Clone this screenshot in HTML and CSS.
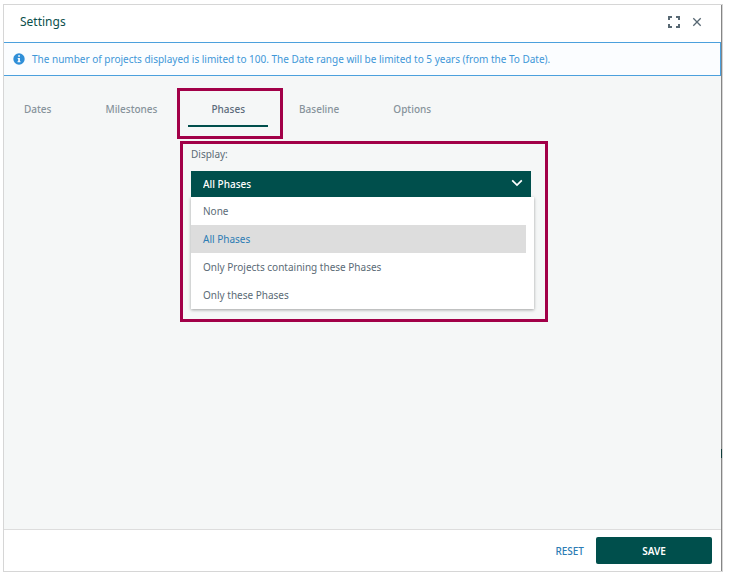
FILE: index.html
```html
<!DOCTYPE html>
<html lang="en">
<head>
<meta charset="utf-8">
<meta name="viewport" content="width=device-width, initial-scale=1">
<title>Settings</title>
<link rel="stylesheet" href="styles.css">
</head>
<body>
<main class="dialog">
  <header class="header">
    <h1 class="title">Settings</h1>
    <button class="icon-button" type="button" aria-label="Expand">
      <svg width="12" height="12" viewBox="0 0 12 12"><path d="M4 1H1v3M8 1h3v3M4 11H1V8M8 11h3V8" fill="none" stroke="currentColor" stroke-width="2"/></svg>
    </button>
    <button class="icon-button" type="button" aria-label="Close">
      <svg width="12" height="12" viewBox="0 0 12 12"><path d="M2.3 2.3l7.4 7.4M9.7 2.3l-7.4 7.4" fill="none" stroke="currentColor" stroke-width="1.3"/></svg>
    </button>
  </header>
  <p class="notice">
    <svg width="12" height="12" viewBox="0 0 12 12" aria-hidden="true"><circle cx="6" cy="6" r="5.7" fill="#2f8fd8"/><path d="M5.2 2.2h1.7v1.6H5.2zM4.7 4.9h2.2v3.3h.6v1.1h-3V8.200h.7V6h-.5z" fill="#fff"/></svg>
    <span>The number of projects displayed is limited to 100. The Date range will be limited to 5 years (from the To Date).</span>
  </p>
  <section class="body">
    <nav class="tabs">
      <a class="tab" href="#dates">Dates</a>
      <a class="tab" href="#milestones">Milestones</a>
      <a class="tab tab-active" href="#phases" aria-current="page">Phases</a>
      <a class="tab" href="#baseline">Baseline</a>
      <a class="tab" href="#options">Options</a>
    </nav>
    <div class="panel">
      <label class="label" for="display">Display:</label>
      <div class="picker">
        <select class="select" id="display">
          <option>None</option>
          <option selected>All Phases</option>
          <option>Only Projects containing these Phases</option>
          <option>Only these Phases</option>
        </select>
        <svg class="chevron" width="12" height="8" viewBox="0 0 12 8" aria-hidden="true"><path d="M1.200 1.300L6 6l4.800-4.700" fill="none" stroke="#fff" stroke-width="1.700"/></svg>
      </div>
      <ul class="menu" role="listbox" aria-label="Display">
        <li class="option" role="option">None</li>
        <li class="option option-selected" role="option" aria-selected="true">All Phases</li>
        <li class="option" role="option">Only Projects containing these Phases</li>
        <li class="option" role="option">Only these Phases</li>
      </ul>
    </div>
  </section>
  <footer class="footer">
    <button class="reset" type="button">RESET</button>
    <button class="save" type="button">SAVE</button>
  </footer>
</main>
</body>
</html>
```
FILE: styles.css
```css
* {
  box-sizing: border-box;
}

body {
  margin: 0;
  padding: 4px 6px 0 3px;
  min-height: 100vh;
  display: flex;
  background: #fff;
  color: #5b6b76;
  font: 10px/16px "Noto Sans", "Open Sans", sans-serif;
}

button,
select {
  font: inherit;
  border: 0;
  margin: 0;
}

.dialog {
  flex: 1;
  position: relative;
  display: flex;
  flex-direction: column;
  border: 1px solid #d6d6d6;
}

/* Dark strip of the page behind the dialog's right edge */
.dialog::after {
  content: "";
  position: absolute;
  top: 0;
  right: 0;
  bottom: 0;
  width: 1px;
  background: linear-gradient(#858585 444px, #103c3a 444px, #103c3a 453px, #858585 453px);
}

.header {
  display: flex;
  align-items: center;
  height: 37px;
  padding: 0 19px 3px 16px;
}

.title {
  flex: 1;
  margin: 0;
  color: #0b4f4c;
  font-size: 12px;
  font-weight: 400;
}

.icon-button {
  display: flex;
  padding: 0;
  margin-left: 11px;
  background: none;
  color: #586873;
}

.notice {
  display: flex;
  align-items: center;
  gap: 7px;
  height: 34px;
  margin: 0;
  padding: 0 9px;
  border: solid #4ba0dd;
  border-width: 1px 2px 1px 0;
  background: #fbfdff;
  color: #3e97d8;
}

.body {
  flex: 1;
  padding-top: 17px;
  background: #f5f7f7;
}

.tabs {
  display: flex;
  gap: 8px;
}

.tab {
  position: relative;
  height: 34px;
  padding: 8px 23px 0;
  border-bottom: 2px solid transparent;
  color: #87939b;
  font-weight: 500;
  text-decoration: none;
}

.tab:first-child {
  padding-left: 20px;
}

.tab-active {
  border-color: #004f4c;
  color: #5b6b7b;
}

.tab-active::after {
  content: "";
  position: absolute;
  inset: -5px -15px -14px -11px;
  border: 3px solid #a20048;
}

.panel {
  width: 368px;
  margin: 14px 0 0 176px;
  padding: 2px 11px 10px 8px;
  border: 3px solid #a20048;
}

.label {
  display: block;
  height: 25px;
}

.picker {
  position: relative;
  margin-right: 3px;
}

.select {
  appearance: none;
  display: block;
  width: 100%;
  height: 26px;
  padding: 0 12px;
  border-radius: 0;
  background: #004f4c;
  color: #fff;
  font-weight: 500;
}

.chevron {
  position: absolute;
  top: 8px;
  right: 8px;
}

.menu {
  list-style: none;
  margin: 0;
  padding: 0 8px 0 0;
  background: #fff;
  box-shadow: 0 1px 3px rgba(0, 0, 0, 0.35);
}

.option {
  height: 28px;
  padding: 0 12px;
  line-height: 28px;
}

.option-selected {
  background: #ddd;
  color: #2c7cb4;
}

.footer {
  display: flex;
  justify-content: flex-end;
  align-items: center;
  gap: 12px;
  height: 42px;
  padding-right: 10px;
  border-top: 1px solid #ddd;
  background: #fff;
}

.reset {
  padding: 0;
  background: none;
  color: #2c7cb4;
  font-weight: 500;
}

.save {
  width: 116px;
  height: 27px;
  border-radius: 2px;
  background: #004f4c;
  color: #fff;
  font-weight: 600;
}
```
